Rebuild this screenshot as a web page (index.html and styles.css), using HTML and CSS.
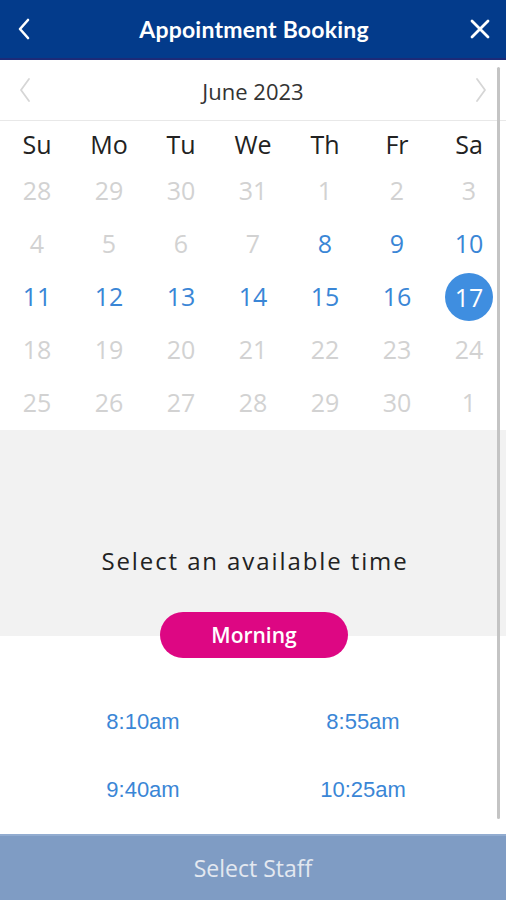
FILE: index.html
```html
<!DOCTYPE html>
<html lang="en">
<head>
<meta charset="utf-8">
<title>Appointment Booking</title>
<link rel="stylesheet" href="styles.css">
</head>
<body>
<div class="app">
  <header class="topbar">
    <button class="icon-btn back" aria-label="Back">
      <svg width="16" height="24" viewBox="0 0 16 24"><path d="M12 3 L4 12 L12 21" fill="none" stroke="#fff" stroke-width="2.6" stroke-linecap="round" stroke-linejoin="round"/></svg>
    </button>
    <h1 class="title">Appointment Booking</h1>
    <button class="icon-btn close" aria-label="Close">
      <svg width="22" height="22" viewBox="0 0 22 22"><path d="M3 3 L19 19 M19 3 L3 19" fill="none" stroke="#fff" stroke-width="2.8" stroke-linecap="round"/></svg>
    </button>
  </header>

  <main class="content">
    <div class="month-nav">
      <span class="arrow">
        <svg width="14" height="26" viewBox="0 0 14 26"><path d="M11 2 L3 13 L11 24" fill="none" stroke="#d6d6d6" stroke-width="1.8" stroke-linecap="round" stroke-linejoin="round"/></svg>
      </span>
      <span class="month">June 2023</span>
      <span class="arrow">
        <svg width="14" height="26" viewBox="0 0 14 26"><path d="M3 2 L11 13 L3 24" fill="none" stroke="#d6d6d6" stroke-width="1.8" stroke-linecap="round" stroke-linejoin="round"/></svg>
      </span>
    </div>

    <div class="calendar">
      <div class="wd">Su</div><div class="wd">Mo</div><div class="wd">Tu</div><div class="wd">We</div><div class="wd">Th</div><div class="wd">Fr</div><div class="wd">Sa</div>

      <div class="day off">28</div><div class="day off">29</div><div class="day off">30</div><div class="day off">31</div><div class="day off">1</div><div class="day off">2</div><div class="day off">3</div>
      <div class="day off">4</div><div class="day off">5</div><div class="day off">6</div><div class="day off">7</div><div class="day on">8</div><div class="day on">9</div><div class="day on">10</div>
      <div class="day on">11</div><div class="day on">12</div><div class="day on">13</div><div class="day on">14</div><div class="day on">15</div><div class="day on">16</div><div class="day selected"><span>17</span></div>
      <div class="day off">18</div><div class="day off">19</div><div class="day off">20</div><div class="day off">21</div><div class="day off">22</div><div class="day off">23</div><div class="day off">24</div>
      <div class="day off">25</div><div class="day off">26</div><div class="day off">27</div><div class="day off">28</div><div class="day off">29</div><div class="day off">30</div><div class="day off">1</div>
    </div>

    <section class="time-head">
      <p class="prompt">Select an available time</p>
      <button class="pill">Morning</button>
    </section>

    <div class="slots">
      <button class="slot">8:10am</button>
      <button class="slot">8:55am</button>
      <button class="slot">9:40am</button>
      <button class="slot">10:25am</button>
    </div>

    <div class="scrollbar"></div>
  </main>

  <footer class="footer">
    <button class="staff-btn">Select Staff</button>
  </footer>
</div>
</body>
</html>
```

FILE: styles.css
```css
* { box-sizing: border-box; }

html, body {
  margin: 0;
  padding: 0;
  background: #fff;
}

body {
  font-family: "Open Sans", "Noto Sans", sans-serif;
  width: 506px;
  height: 900px;
  overflow: hidden;
}

button {
  font: inherit;
  border: 0;
  background: none;
  padding: 0;
  cursor: pointer;
}

.app {
  display: flex;
  flex-direction: column;
  height: 900px;
}

.topbar {
  height: 60px;
  flex: none;
  background: #033b8b;
  border-bottom: 2px solid #1c2a78;
  display: flex;
  align-items: center;
  justify-content: space-between;
  padding: 0 14px 0 12px;
}

.icon-btn {
  width: 24px;
  height: 28px;
  display: flex;
  align-items: center;
  justify-content: center;
}

.title {
  margin: 0 0 0 4px;
  color: #fff;
  font-family: "Lato", "Open Sans", sans-serif;
  font-weight: 700;
  font-size: 23px;
  letter-spacing: 0.2px;
}

.content {
  flex: 1;
  position: relative;
  display: flex;
  flex-direction: column;
}

.month-nav {
  height: 61px;
  border-bottom: 1px solid #e8e8e8;
  display: flex;
  align-items: center;
  justify-content: space-between;
  padding: 0 18px 0 18px;
}

.arrow {
  display: flex;
  width: 14px;
}

.month {
  font-size: 22px;
  color: #333;
  padding-top: 1px;
}

.calendar {
  display: grid;
  grid-template-columns: repeat(7, 72px);
  grid-template-rows: 43px;
  grid-auto-rows: 53px;
  padding-left: 1px;
}

.wd {
  height: 43px;
  display: flex;
  align-items: flex-end;
  justify-content: center;
  font-size: 25px;
  color: #222;
  padding-bottom: 3px;
}

.day {
  display: flex;
  align-items: center;
  justify-content: center;
  font-size: 25px;
  padding-bottom: 1px;
}

.day.off { color: #d2d2d2; }
.day.on { color: #3a86d6; }

.day.selected span {
  width: 48px;
  height: 48px;
  border-radius: 50%;
  background: #3f8ee0;
  color: #fff;
  display: flex;
  align-items: center;
  justify-content: center;
  margin-top: 2px;
}

.time-head {
  height: 206px;
  background: #f2f2f2;
  display: flex;
  flex-direction: column;
  align-items: center;
  justify-content: flex-end;
  margin-top: 1px;
}

.prompt {
  margin: 0 0 36px 4px;
  font-size: 24px;
  letter-spacing: 1.9px;
  color: #222;
  line-height: 30px;
}

.pill {
  width: 188px;
  height: 46px;
  border-radius: 23px;
  background: #dd0783;
  color: #fff;
  font-weight: 600;
  font-size: 21px;
  margin: 0 0 -22px 2px;
  position: relative;
  z-index: 1;
}

.slots {
  display: grid;
  grid-template-columns: 220px 220px;
  grid-auto-rows: 68px;
  padding: 52px 0 0 33px;
}

.slot {
  font-family: "Liberation Sans", Arial, sans-serif;
  font-size: 22px;
  color: #3a86d6;
  height: 68px;
}

.scrollbar {
  position: absolute;
  right: 6px;
  top: 7px;
  width: 3px;
  height: 752px;
  background: #c4c4c4;
  border-radius: 2px;
}

.footer {
  height: 66px;
  flex: none;
  background: #7f9cc4;
  border-top: 2px solid #92acd0;
}

.staff-btn {
  width: 100%;
  height: 100%;
  color: #e3e8f0;
  font-size: 23px;
}
```
